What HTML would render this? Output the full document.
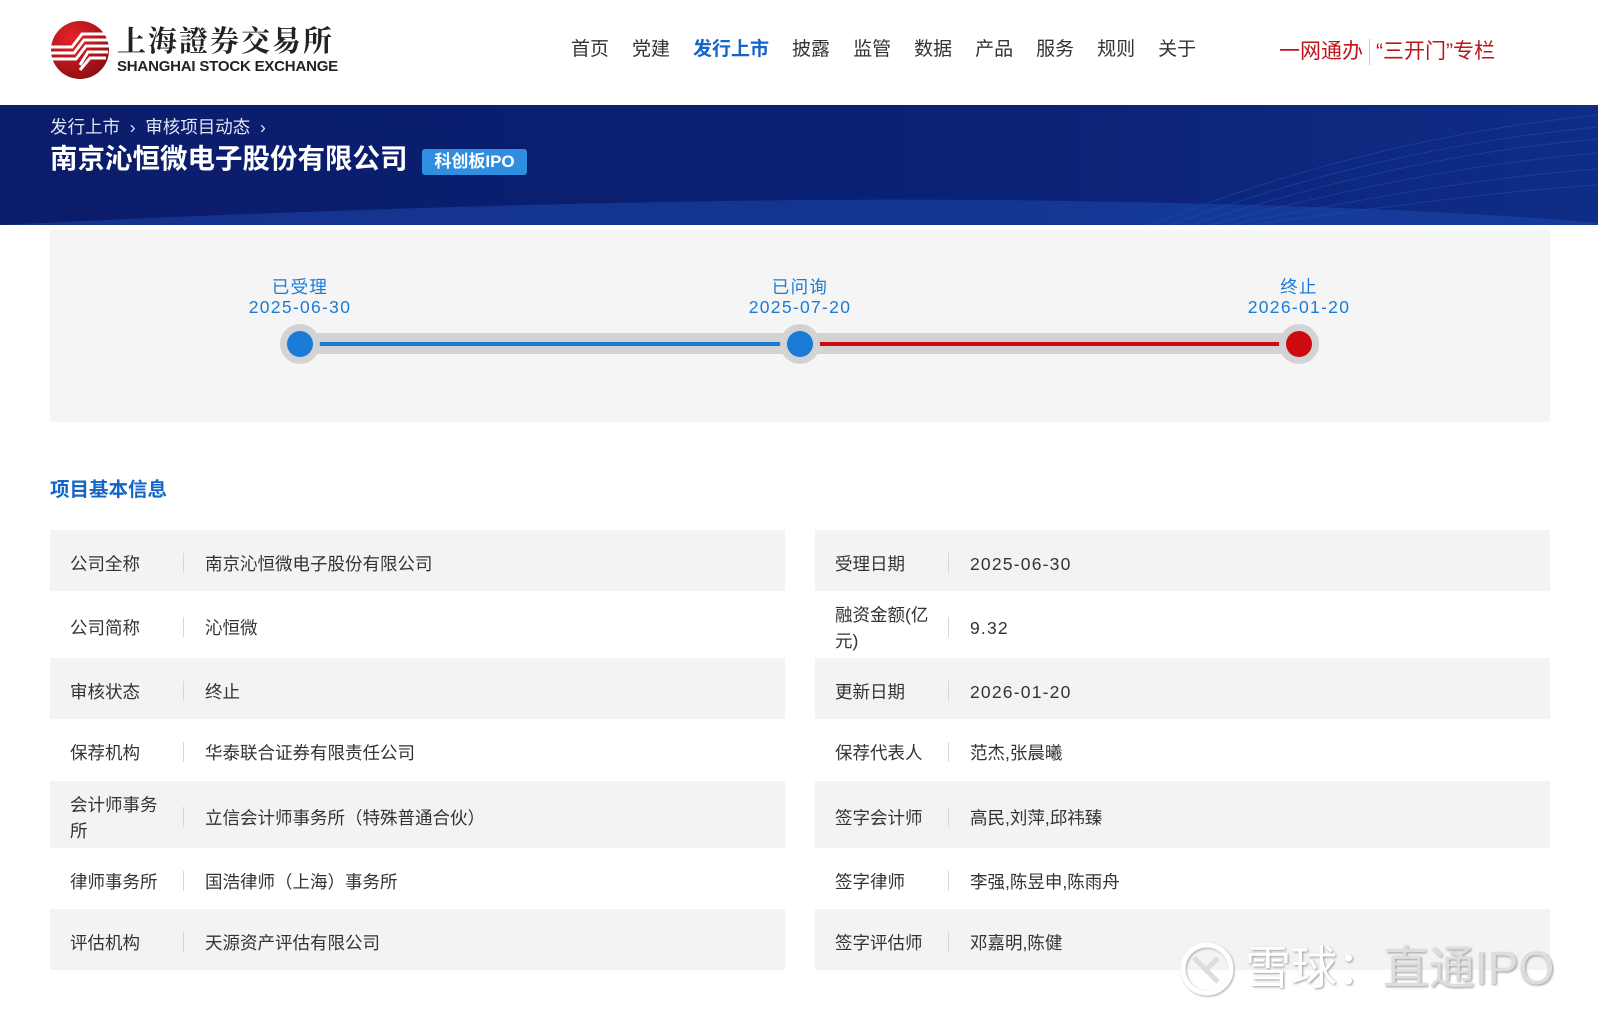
<!DOCTYPE html>
<html><head><meta charset="utf-8">
<style>
*{margin:0;padding:0;box-sizing:border-box}
body{width:1598px;height:1020px;overflow:hidden;background:#fff;font-family:"Liberation Sans","Noto Sans CJK SC",sans-serif;color:#333;position:relative}
.abs{position:absolute}
.nav{top:34px;font-size:19px;color:#333;white-space:nowrap}
.nav span{margin-right:23px}
.banner{top:105px;left:0;width:1598px;height:120px;background:linear-gradient(90deg,#0b1c6a 0%,#0a2174 60%,#0f2d86 100%);overflow:hidden}
.tl{left:50px;top:230px;width:1500px;height:192px;background:#f5f5f5}
.lab{color:#1a7bd6;font-size:17.5px;text-align:center;width:200px;line-height:20px;letter-spacing:1.3px}
.row{position:absolute;height:61px;font-size:17.5px;color:#333}
.row.g{background:#f4f3f2}
.row .l{position:absolute;left:20px;top:50%;transform:translateY(-50%);margin-top:3px;width:100px;line-height:26px}
.row .s{position:absolute;left:133px;top:50%;margin-top:-8px;width:1px;height:20px;background:#d6d6d6}
.row .v{position:absolute;left:155px;top:50%;transform:translateY(-50%);margin-top:3px;line-height:26px}
.n{letter-spacing:1.2px}
</style></head><body>
<svg class="abs" style="left:50px;top:20px" width="60" height="60" viewBox="0 0 60 60">
<defs><radialGradient id="rg" cx="35%" cy="30%" r="75%"><stop offset="0" stop-color="#e8222a"/><stop offset="1" stop-color="#8e0f12"/></radialGradient></defs>
<circle cx="30" cy="30" r="29" fill="url(#rg)"/>
<path d="M0 27 H22 L32 14 H58 M0 33 H24 L34 20 H59 M2 39 H26 L36 26 H60 M30 45 L38 32 H58 M30 50 L40 38 H56" stroke="#fff" stroke-width="3" fill="none"/>
</svg>
<div class="abs" style="left:117px;top:23px;font-size:29px;font-family:'Noto Serif CJK SC',serif;font-weight:bold;color:#222;letter-spacing:2px;line-height:34px">上海證券交易所</div>
<div class="abs" style="left:117px;top:58px;font-size:15px;font-weight:bold;color:#222;line-height:18px;letter-spacing:-.2px">SHANGHAI STOCK EXCHANGE</div>
<div class="abs nav" style="left:571px"><span>首页</span><span>党建</span><span style="color:#1565c8;font-weight:bold">发行上市</span><span>披露</span><span>监管</span><span>数据</span><span>产品</span><span>服务</span><span>规则</span><span>关于</span></div>
<div class="abs" style="left:1279px;top:35px;font-size:21px;color:#c0141c;white-space:nowrap">一网通办<span style="display:inline-block;width:1px;height:26px;background:#ccc;vertical-align:middle;margin:0 6px"></span>“三开门”专栏</div>
<div class="abs banner">
<svg width="1598" height="120" style="position:absolute;left:0;top:0">
<g fill="none" stroke="#2d62c8" stroke-opacity=".35">
<path d="M1150 120 C1300 60 1450 25 1598 10"/>
<path d="M1170 120 C1320 65 1460 35 1598 22"/>
<path d="M1190 120 C1340 72 1470 45 1598 34"/>
<path d="M1210 120 C1360 80 1480 58 1598 48"/>
<path d="M1230 120 C1380 90 1490 72 1598 64"/>
<path d="M1250 120 C1400 100 1500 86 1598 80"/>
</g>
<path d="M0 120 C300 105 700 92 1000 95 C1250 98 1450 105 1598 118 L1598 120 Z" fill="#1e4fb8" opacity=".45"/>
</svg>
<div class="abs" style="left:50px;top:9px;font-size:17.5px;color:#dfe6f5;white-space:nowrap">发行上市 &nbsp;›&nbsp; 审核项目动态 &nbsp;›</div>
<div class="abs" style="left:50px;top:37px;font-size:27.5px;font-weight:bold;color:#fff;white-space:nowrap;line-height:34px">南京沁恒微电子股份有限公司</div>
<div class="abs" style="left:422px;top:44px;width:105px;height:26px;background:#2f8ee0;border-radius:3px;color:#fff;font-size:17px;font-weight:bold;text-align:center;line-height:26px">科创板IPO</div>
</div>
<div class="abs tl"></div>
<div class="abs" style="left:290px;top:333px;width:1020px;height:21px;background:#d3d3d3;border-radius:10px"></div>
<div class="abs" style="left:300px;top:342px;width:500px;height:4px;background:#1a7bd6"></div>
<div class="abs" style="left:800px;top:342px;width:499px;height:4px;background:#cc0a0f"></div>
<div class="abs" style="left:280px;top:324px;width:40px;height:40px;border-radius:50%;background:#d3d3d3"></div>
<div class="abs" style="left:287px;top:331px;width:26px;height:26px;border-radius:50%;background:#1a7bd6"></div>
<div class="abs" style="left:780px;top:324px;width:40px;height:40px;border-radius:50%;background:#d3d3d3"></div>
<div class="abs" style="left:787px;top:331px;width:26px;height:26px;border-radius:50%;background:#1a7bd6"></div>
<div class="abs" style="left:1279px;top:324px;width:40px;height:40px;border-radius:50%;background:#d3d3d3"></div>
<div class="abs" style="left:1286px;top:331px;width:26px;height:26px;border-radius:50%;background:#cc0a0f"></div>
<div class="abs lab" style="left:200px;top:277px">已受理<br>2025-06-30</div>
<div class="abs lab" style="left:700px;top:277px">已问询<br>2025-07-20</div>
<div class="abs lab" style="left:1199px;top:277px">终止<br>2026-01-20</div>
<div class="abs" style="left:50px;top:473px;font-size:19.5px;font-weight:bold;color:#1565c8">项目基本信息</div>

<div class="row g" style="left:50px;top:530px;width:735px"><div class="l">公司全称</div><div class="s"></div><div class="v">南京沁恒微电子股份有限公司</div></div>
<div class="row" style="left:50px;top:591px;width:735px;height:67px"><div class="l">公司简称</div><div class="s"></div><div class="v">沁恒微</div></div>
<div class="row g" style="left:50px;top:658px;width:735px"><div class="l">审核状态</div><div class="s"></div><div class="v">终止</div></div>
<div class="row" style="left:50px;top:719px;width:735px;height:62px"><div class="l">保荐机构</div><div class="s"></div><div class="v">华泰联合证券有限责任公司</div></div>
<div class="row g" style="left:50px;top:781px;width:735px;height:67px"><div class="l">会计师事务所</div><div class="s"></div><div class="v">立信会计师事务所（特殊普通合伙）</div></div>
<div class="row" style="left:50px;top:848px;width:735px"><div class="l">律师事务所</div><div class="s"></div><div class="v">国浩律师（上海）事务所</div></div>
<div class="row g" style="left:50px;top:909px;width:735px"><div class="l">评估机构</div><div class="s"></div><div class="v">天源资产评估有限公司</div></div>

<div class="row g" style="left:815px;top:530px;width:735px"><div class="l">受理日期</div><div class="s"></div><div class="v n">2025-06-30</div></div>
<div class="row" style="left:815px;top:591px;width:735px;height:67px"><div class="l">融资金额(亿元)</div><div class="s"></div><div class="v n">9.32</div></div>
<div class="row g" style="left:815px;top:658px;width:735px"><div class="l">更新日期</div><div class="s"></div><div class="v n">2026-01-20</div></div>
<div class="row" style="left:815px;top:719px;width:735px;height:62px"><div class="l">保荐代表人</div><div class="s"></div><div class="v">范杰,张晨曦</div></div>
<div class="row g" style="left:815px;top:781px;width:735px;height:67px"><div class="l">签字会计师</div><div class="s"></div><div class="v">高民,刘萍,邱祎臻</div></div>
<div class="row" style="left:815px;top:848px;width:735px"><div class="l">签字律师</div><div class="s"></div><div class="v">李强,陈昱申,陈雨舟</div></div>
<div class="row g" style="left:815px;top:909px;width:735px"><div class="l">签字评估师</div><div class="s"></div><div class="v">邓嘉明,陈健</div></div>

<svg class="abs" style="left:1178px;top:940px" width="58" height="58" viewBox="0 0 58 58"><circle cx="29" cy="29" r="24" fill="none" stroke="#fff" stroke-width="5" style="filter:drop-shadow(1px 1px 1px #aaa)"/><path d="M16 18 L40 42 M40 18 L28 30" stroke="#ddd" stroke-width="5" fill="none"/></svg>
<div class="abs" style="left:1245px;top:942px;font-size:46px;color:#fff;text-shadow:1px 1px 2px #999;white-space:nowrap;line-height:52px">雪球：<span style="color:#ddd">直通IPO</span></div>
</body></html>
